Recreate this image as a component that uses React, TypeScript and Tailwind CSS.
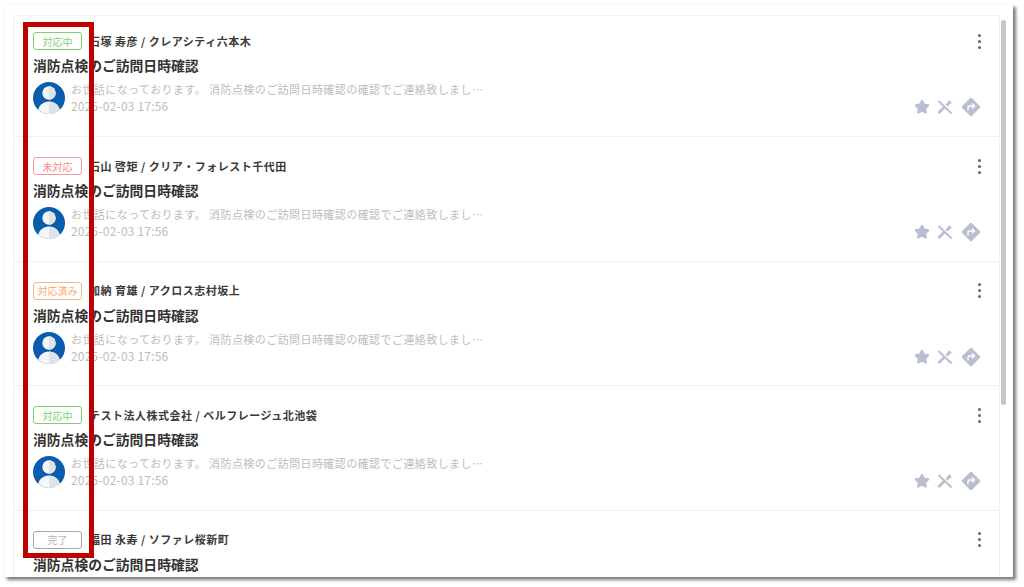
import { Star } from "lucide-react";

const font = { fontFamily: '"Noto Sans CJK JP", "Noto Sans", sans-serif' };

const rows = [
  { status: "対応中", badge: "border-[#7fd06f] text-[#7fd06f]", name: "石塚 寿彦 / クレアシティ六本木" },
  { status: "未対応", badge: "border-[#f79a9a] text-[#f58a8a]", name: "石山 啓矩 / クリア・フォレスト千代田" },
  { status: "対応済み", badge: "border-[#f7b98a] text-[#f5a76e]", name: "加納 育雄 / アクロス志村坂上" },
  { status: "対応中", badge: "border-[#7fd06f] text-[#7fd06f]", name: "テスト法人株式会社 / ベルフレージュ北池袋" },
  { status: "完了", badge: "border-[#a8a8a8] text-[#b4b4b4]", name: "福田 永寿 / ソファレ桜新町" },
];

function Avatar() {
  return (
    <svg viewBox="0 0 32 32" className="h-8 w-8 shrink-0">
      <defs>
        <clipPath id="avatar-clip">
          <circle cx="16" cy="16" r="16" />
        </clipPath>
      </defs>
      <g clipPath="url(#avatar-clip)">
        <rect width="32" height="32" fill="#0a5cad" />
        <circle cx="16" cy="11" r="6.7" fill="#f4f6f8" />
        <path d="M16 4.3a6.7 6.7 0 0 1 0 13.4z" fill="#dde3e9" />
        <ellipse cx="16" cy="30" rx="11" ry="10.5" fill="#f4f6f8" />
        <path d="M16 19.5c6 0 11 4.7 11 10.5s-5 2-11 2z" fill="#dde3e9" />
      </g>
    </svg>
  );
}

function Dots() {
  return (
    <div className="mr-[-1px] flex flex-col gap-[3px]">
      <span className="h-[3px] w-[3px] rounded-full bg-[#666]" />
      <span className="h-[3px] w-[3px] rounded-full bg-[#666]" />
      <span className="h-[3px] w-[3px] rounded-full bg-[#666]" />
    </div>
  );
}

function Tools() {
  return (
    <svg viewBox="0 0 16 16" className="h-4 w-4">
      <path d="M1.5 2l13 12.5" stroke="#b9bfd0" strokeWidth="2" fill="none" />
      <path d="M1.5 14l6-6" stroke="#b9bfd0" strokeWidth="2.6" fill="none" />
      <path d="M8.5 5.5l2.5-2.5 1-2 3 3-2 1-2.5 2.5z" fill="#b9bfd0" />
    </svg>
  );
}

function Turn() {
  return (
    <svg viewBox="0 0 22 22" className="h-[22px] w-[22px]">
      <rect x="4" y="4" width="14" height="14" rx="1.5" transform="rotate(45 11 11)" fill="#b9bfd0" />
      <path d="M8 14.5v-3a1.5 1.5 0 0 1 1.5-1.5h4.5M12 7.5l2.5 2.5-2.5 2.5" stroke="#fff" strokeWidth="1.4" fill="none" />
    </svg>
  );
}

export default function App() {
  return (
    <div className="h-[587px] w-[1024px] overflow-hidden bg-white pt-1 pl-1" style={font}>
      <div className="relative h-[573px] w-[1009px] pt-[11px] pl-[9px] shadow-[3px_3px_3px_rgba(0,0,0,0.5),0_0_2px_rgba(0,0,0,0.08)]">
        {/* card list */}
        <div className="flex h-full w-[987px] flex-col overflow-hidden rounded-t border border-b-0 border-[#eef0f3]">
          {rows.map((row, i) => (
            <div
              key={i}
              className={`shrink-0 pr-[19px] pl-[19px] ${i === 0 ? "h-[121px] pt-4" : "h-[124.5px] pt-5"} ${i < 4 ? "border-b border-[#eff1f6]" : ""}`}
            >
              <div className="flex items-center justify-between">
                <div className="flex items-center">
                  <span className={`flex h-[18px] w-[49px] items-center justify-center rounded-[3px] border text-[10px] ${row.badge}`}>
                    {row.status}
                  </span>
                  <span className="-mt-px ml-[7px] text-[11px] leading-[18px] font-semibold tracking-[0.5px] text-[#3a3a3a]">{row.name}</span>
                </div>
                <Dots />
              </div>
              <div className="mt-1 text-[13.8px] leading-[22px] font-semibold text-[#333]">消防点検のご訪問日時確認</div>
              <div className={i < 4 ? "mt-[6px] flex" : "hidden"}>
                <Avatar />
                <div className="-mt-[2px] ml-[6px] flex-1">
                  <div className="text-[11px] leading-[18px] tracking-[0.43px] text-[#bdbdbd]">
                    お世話になっております。 消防点検のご訪問日時確認の確認でご連絡致しまし…
                  </div>
                  <div className="-mt-px text-xs leading-[18px] tracking-[0.2px] text-[#bdbdbd]">2025-02-03 17:56</div>
                </div>
                <div className="mt-[14px] mr-[-2px] flex items-center gap-[7px] self-start">
                  <Star className="h-4 w-4 fill-[#b9bfd0] text-[#b9bfd0]" />
                  <Tools />
                  <Turn />
                </div>
              </div>
            </div>
          ))}
        </div>
        {/* scrollbar */}
        <div className="absolute top-4 left-[997px] h-[385px] w-[5px] rounded-full bg-[#c6c6c6]" />
        {/* red annotation */}
        <div className="absolute top-[18px] left-[19px] h-[536px] w-[71px] border-[5px] border-[#bf0000]" />
      </div>
    </div>
  );
}
